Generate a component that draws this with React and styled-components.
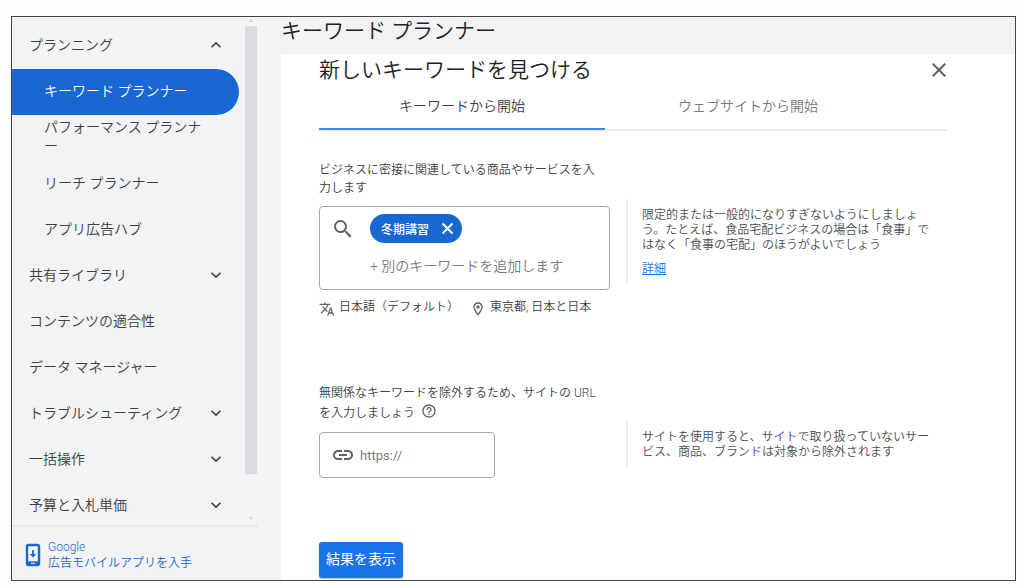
import React from "react";
import styled, { createGlobalStyle } from "styled-components";
import {
  MdClose,
  MdExpandLess,
  MdExpandMore,
  MdHelpOutline,
  MdLink,
  MdOutlineLocationOn,
  MdSearch,
  MdTranslate,
} from "react-icons/md";

const GlobalStyle = createGlobalStyle`
  * {
    box-sizing: border-box;
  }

  body {
    margin: 0;
    background: #fefefe;
    color: #3c4043;
    font-family: Roboto, "Noto Sans CJK JP", sans-serif;
    font-size: 14px;
    font-weight: 350;
  }

  button, input {
    font-family: inherit;
    font-weight: inherit;
  }

  svg {
    flex: none;
    display: block;
  }
`;

const Page = styled.div`
  height: 100vh;
  padding: 16px 8px 6px 11px;
`;

const Frame = styled.div`
  display: flex;
  height: 100%;
  overflow: hidden;
  border: 1px solid #444;
  background: #f1f3f4;
`;

const Sidebar = styled.aside`
  display: flex;
  flex-direction: column;
  flex: none;
  width: 246px;
  margin-right: 23px;
`;

const NavArea = styled.div`
  display: flex;
  flex: 1;
  min-height: 0;
  border-bottom: 2px solid #e5e7e9;
`;

const Nav = styled.nav`
  flex: 1;
  overflow: hidden;
  padding: 6px 6px 0 0;
`;

const NavItem = styled.a`
  display: flex;
  align-items: center;
  justify-content: space-between;
  height: 46px;
  padding: 0 13px 2px ${(props) => (props.$sub ? 32 : 17)}px;
  border-radius: 0 23px 23px 0;
  background: ${(props) => (props.$active ? "#1967d2" : "transparent")};
  color: ${(props) => (props.$active ? "#fff" : "#3c4043")};
  line-height: 19px;
  text-decoration: none;

  span {
    flex: 1;
    max-width: 158px;
  }
`;

const ScrollBar = styled.div`
  display: flex;
  flex-direction: column;
  align-items: center;
  justify-content: space-between;
  width: 12px;
  margin-right: 1px;
  padding: 2px 0 5px;
`;

const ScrollArrow = styled.div`
  border: 3px solid transparent;
  border-top-width: ${(props) => (props.$up ? 0 : 3)}px;
  border-bottom-width: ${(props) => (props.$up ? 3 : 0)}px;
  border-top-color: #d6d8db;
  border-bottom-color: #d6d8db;
`;

const ScrollTrack = styled.div`
  flex: 1;
  width: 100%;
  margin: 4px 0;
`;

const ScrollThumb = styled.div`
  height: 92%;
  background: #dadce0;
`;

const AppLink = styled.a`
  display: flex;
  align-items: center;
  gap: 3px;
  height: 53px;
  padding: 2px 9px 0;
  color: #1967d2;
  font-size: 12px;
  line-height: 16px;
  text-decoration: none;
`;

const Main = styled.main`
  display: flex;
  flex: 1;
  flex-direction: column;
  min-width: 0;
`;

const PageTitle = styled.h1`
  flex: none;
  height: 37px;
  margin: 0;
  color: #202124;
  font-size: 21px;
  font-weight: inherit;
  line-height: 29px;
`;

const Panel = styled.section`
  flex: 1;
  padding: 0 68px 0 38px;
  background: #fff;
`;

const PanelHeader = styled.div`
  display: flex;
  align-items: center;
  justify-content: space-between;
  height: 32px;

  h2 {
    margin: 0;
    color: #202124;
    font-size: 21px;
    font-weight: inherit;
    line-height: 32px;
  }
`;

const IconButton = styled.button`
  display: flex;
  margin: 0;
  padding: 0;
  border: 0;
  background: none;
  color: inherit;
`;

const CloseButton = styled(IconButton)`
  margin-right: -4px;
  color: #5f6368;
`;

const Tabs = styled.div`
  display: flex;
  height: 45px;
  border-bottom: 2px solid #ecedef;
`;

const Tab = styled.button`
  flex: 0 0 286px;
  height: 44px;
  padding: 0 0 4px;
  border: 0;
  border-bottom: 2px solid ${(props) => (props.$active ? "#4285f4" : "transparent")};
  background: none;
  color: ${(props) => (props.$active ? "#3c4043" : "#757a7e")};
  font-size: 14px;
`;

const Section = styled.div`
  display: flex;
  align-items: flex-start;
  gap: 16px;
  margin-top: ${(props) => props.$space}px;
`;

const Field = styled.div`
  flex: 0 0 291px;
`;

const Label = styled.label`
  display: block;
  margin-bottom: 9px;
  padding-right: 5px;
  color: #3c4043;
  font-size: 12px;
  line-height: ${(props) => props.$line || 18}px;

  svg {
    display: inline-block;
    margin-left: 6px;
    vertical-align: -2px;
    color: #5f6368;
  }
`;

const KeywordBox = styled.div`
  display: flex;
  align-items: flex-start;
  gap: 15px;
  height: 84px;
  padding: 7px 11px;
  border: 1px solid #a5a9ad;
  border-radius: 4px;
  color: #5f6368;

  > svg {
    margin-top: 3px;
  }
`;

const KeywordList = styled.div`
  display: flex;
  flex: 1;
  flex-direction: column;
  align-items: flex-start;
  gap: 12px;
`;

const Chip = styled.span`
  display: flex;
  align-items: center;
  gap: 12px;
  height: 29px;
  padding: 0 8px 0 11px;
  border-radius: 15px;
  background: #1967d2;
  color: #fff;
  font-size: 12px;
  font-weight: 500;
`;

const TextInput = styled.input`
  width: 100%;
  min-width: 0;
  height: 22px;
  padding: 0;
  border: 0;
  outline: 0;
  background: none;
  color: #3c4043;
  font-size: 14px;

  &::placeholder {
    color: #757a7e;
    opacity: 1;
  }
`;

const UrlInput = styled(TextInput)`
  font-size: 13px;
  font-weight: 400;
`;

const UrlBox = styled.div`
  display: flex;
  align-items: center;
  gap: 5px;
  width: 176px;
  height: 46px;
  padding: 0 11px;
  border: 1px solid #a5a9ad;
  border-radius: 4px;
  color: #5f6368;
`;

const Meta = styled.div`
  display: flex;
  gap: 11px;
  margin-top: 8px;
  color: #3c4043;
  font-size: 12px;
  line-height: 19px;
  white-space: nowrap;

  span {
    display: flex;
    align-items: center;
    gap: 4px;
  }

  svg {
    margin-top: 2px;
    color: #5f6368;
  }
`;

const Hint = styled.div`
  flex: 1;
  max-width: 308px;
  min-height: ${(props) => props.$min}px;
  margin-top: 38px;
  padding: 9px 0 0 14px;
  border-left: 2px solid #ecedef;
  color: #4a4e52;
  font-size: 12px;
  line-height: 15px;

  p {
    margin: 0 0 9px;
  }

  a {
    color: #1a73e8;
  }
`;

const SubmitButton = styled.button`
  height: 36px;
  margin-top: 64px;
  padding: 0 7px 4px;
  border: 0;
  border-radius: 3px;
  background: #1a73e8;
  box-shadow: 0 1px 2px rgba(0, 0, 0, 0.3);
  color: #fff;
  font-size: 14px;
  font-weight: 400;
`;

const navItems = [
  { title: "プランニング", icon: "less" },
  { title: "キーワード プランナー", sub: true, active: true },
  { title: "パフォーマンス プランナー", sub: true },
  { title: "リーチ プランナー", sub: true },
  { title: "アプリ広告ハブ", sub: true },
  { title: "共有ライブラリ", icon: "more" },
  { title: "コンテンツの適合性" },
  { title: "データ マネージャー" },
  { title: "トラブルシューティング", icon: "more" },
  { title: "一括操作", icon: "more" },
  { title: "予算と入札単価", icon: "more" },
];

const PhoneIcon = () => (
  <svg width="24" height="24" viewBox="0 0 24 24" fill="none" stroke="currentColor">
    <rect x="6" y="2" width="12" height="20" rx="1.5" strokeWidth="2.4" />
    <path d="M6 20h12" strokeWidth="3.4" />
    <path d="M10 20.3h4" stroke="#f1f3f4" strokeWidth="1" />
    <path d="M12 7v5" strokeWidth="1.8" />
    <path d="M8.8 11h6.4L12 14.6z" fill="currentColor" stroke="none" />
  </svg>
);

const RemoveIcon = () => (
  <svg width="13" height="13" viewBox="0 0 13 13" stroke="currentColor" strokeWidth="2">
    <path d="M1.5 1.5l10 10M11.5 1.5l-10 10" />
  </svg>
);

const SideMenu = () => (
  <Sidebar>
    <NavArea>
      <Nav>
        {navItems.map((item) => (
          <NavItem key={item.title} href="#" $sub={item.sub} $active={item.active}>
            <span>{item.title}</span>
            {item.icon === "less" && <MdExpandLess size={20} />}
            {item.icon === "more" && <MdExpandMore size={20} />}
          </NavItem>
        ))}
      </Nav>
      <ScrollBar>
        <ScrollArrow $up />
        <ScrollTrack>
          <ScrollThumb />
        </ScrollTrack>
        <ScrollArrow />
      </ScrollBar>
    </NavArea>
    <AppLink href="#">
      <PhoneIcon />
      <span>
        Google
        <br />
        広告モバイルアプリを入手
      </span>
    </AppLink>
  </Sidebar>
);

const App = () => {
  return (
    <Page lang="ja">
      <GlobalStyle />
      <Frame>
        <SideMenu />
        <Main>
          <PageTitle>キーワード プランナー</PageTitle>
          <Panel>
            <PanelHeader>
              <h2>新しいキーワードを見つける</h2>
              <CloseButton aria-label="閉じる">
                <MdClose size={24} />
              </CloseButton>
            </PanelHeader>
            <Tabs role="tablist">
              <Tab role="tab" aria-selected="true" $active>キーワードから開始</Tab>
              <Tab role="tab" aria-selected="false">ウェブサイトから開始</Tab>
            </Tabs>

            <Section $space={30}>
              <Field>
                <Label htmlFor="keyword">
                  ビジネスに密接に関連している商品やサービスを入力します
                </Label>
                <KeywordBox>
                  <MdSearch size={24} />
                  <KeywordList>
                    <Chip>
                      冬期講習
                      <IconButton aria-label="削除">
                        <RemoveIcon />
                      </IconButton>
                    </Chip>
                    <TextInput id="keyword" placeholder="+ 別のキーワードを追加します" />
                  </KeywordList>
                </KeywordBox>
                <Meta>
                  <span>
                    <MdTranslate size={16} />
                    日本語（デフォルト）
                  </span>
                  <span>
                    <MdOutlineLocationOn size={16} />
                    東京都, 日本と日本
                  </span>
                </Meta>
              </Field>
              <Hint $min={84}>
                <p>
                  限定的または一般的になりすぎないようにしましょう。たとえば、食品宅配ビジネスの場合は「食事」ではなく「食事の宅配」のほうがよいでしょう
                </p>
                <a href="#">詳細</a>
              </Hint>
            </Section>

            <Section $space={66}>
              <Field>
                <Label htmlFor="url" $line={20}>
                  無関係なキーワードを除外するため、サイトの URL を入力しましょう
                  <MdHelpOutline size={16} />
                </Label>
                <UrlBox>
                  <MdLink size={24} />
                  <UrlInput id="url" placeholder="https://" />
                </UrlBox>
              </Field>
              <Hint $min={46}>
                サイトを使用すると、サイトで取り扱っていないサービス、商品、ブランドは対象から除外されます
              </Hint>
            </Section>

            <SubmitButton>結果を表示</SubmitButton>
          </Panel>
        </Main>
      </Frame>
    </Page>
  );
};

export default App;
